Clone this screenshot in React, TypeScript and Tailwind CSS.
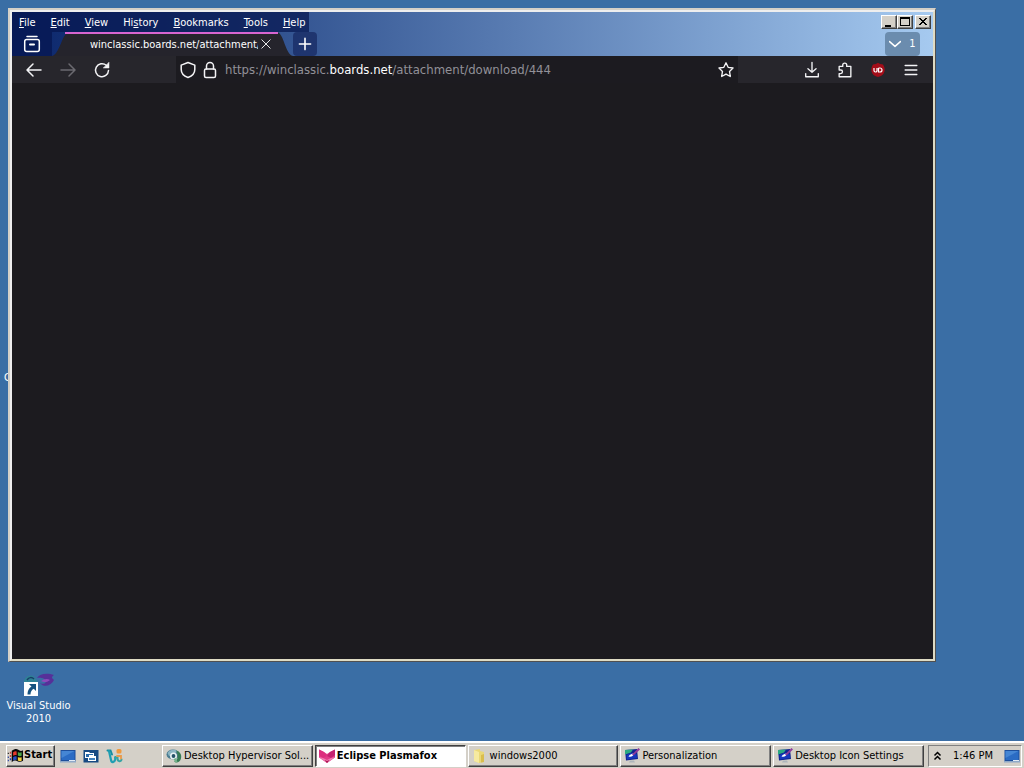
import type { ReactNode } from "react";

const UI = "font-['DejaVu_Sans_Condensed','DejaVu_Sans',sans-serif]";
const RAISED =
  "border border-t-white border-l-white border-r-[#404040] border-b-[#404040] shadow-[inset_-1px_-1px_0_#808080]";

function MenuItem({ label, at = 0 }: { label: string; at?: number }) {
  return (
    <button type="button" className="whitespace-nowrap leading-4">
      {label.slice(0, at)}
      <span className="underline underline-offset-1">{label[at]}</span>
      {label.slice(at + 1)}
    </button>
  );
}

function Icon({ size = "size-5", children }: { size?: string; children: ReactNode }) {
  return (
    <svg
      viewBox="0 0 20 20"
      className={`${size} shrink-0`}
      fill="none"
      stroke="currentColor"
      strokeWidth="1.5"
      strokeLinecap="round"
      strokeLinejoin="round"
      aria-hidden="true"
    >
      {children}
    </svg>
  );
}

function IconButton({ label, className = "", children }: { label: string; className?: string; children: ReactNode }) {
  return (
    <button type="button" aria-label={label} className={`flex size-5 shrink-0 items-center justify-center ${className}`}>
      {children}
    </button>
  );
}

function CaptionButton({ label, children }: { label: string; children: ReactNode }) {
  return (
    <button
      type="button"
      aria-label={label}
      className={`flex h-[14px] w-4 items-center justify-center bg-[#d4d0c8] text-black ${RAISED}`}
    >
      <svg viewBox="0 0 12 10" className="h-[10px] w-3" aria-hidden="true" shapeRendering="crispEdges">
        {children}
      </svg>
    </button>
  );
}

function MonitorIcon() {
  return (
    <svg viewBox="0 0 16 16" className="size-4 shrink-0" aria-hidden="true">
      <rect x="0.5" y="2" width="15" height="11" fill="#1d4f9c" />
      <rect x="1.5" y="3" width="13" height="9" fill="#2b6cc4" />
      <path d="M1.5 3h13L1.5 10z" fill="#4586d4" />
      <path d="M0 13h16v1.5H0z" fill="#8fa9c8" />
      <path d="M9 12h6v1H9z" fill="#e2ebf5" />
    </svg>
  );
}

function WindowsIcon() {
  return (
    <svg viewBox="0 0 16 16" className="size-4 shrink-0" aria-hidden="true">
      <rect x="0.5" y="2" width="15" height="12.5" fill="#174a82" />
      <path d="M2 4h4l1 1h4v3h2v5H5v-3H2z" fill="#fff" />
      <path d="M3 6h7v1H6v2H3z" fill="#286bac" />
      <path d="M6 10h6v2H6z" fill="#3d7fbd" />
    </svg>
  );
}

function MessengerIcon() {
  return (
    <svg viewBox="0 0 17 16" className="h-4 w-[17px] shrink-0" fill="none" strokeLinecap="round" aria-hidden="true">
      <path d="M1.500 2.500h3l1.500 4" stroke="#168da0" strokeWidth="2" />
      <path d="M3 3l2 9c.5 3 3.500 2.500 4 0l.5-3" stroke="#1e9eb2" strokeWidth="2.200" />
      <path d="M9 9.500h2.500c-.5 4 3.500 5 4 2" stroke="#35a4a5" strokeWidth="2" />
      <rect x="10.500" y="1" width="5" height="4.500" rx="1.500" fill="#f09a3d" />
      <path d="M11 8h4v2.500" stroke="#e99b4b" strokeWidth="1.800" />
    </svg>
  );
}

function FlagIcon() {
  return (
    <svg viewBox="0 0 18 16" className="h-4 w-[17px] shrink-0" aria-hidden="true">
      <path d="M5 2.500C8 .5 10 0 12 1.500s3 1.500 5 .5v11c-2 1.500-4 1.500-6 .5s-3-1-6 1z" fill="#0a0a0a" />
      <path d="M6.500 4C8 3 9 2.700 10.200 3.200v4C9 6.800 8 7 6.500 7.800z" fill="#e6392c" />
      <path d="M11.500 3.800c1.500.8 2.600.8 4 .2v3.800c-1.500.7-2.600.5-4-.2z" fill="#4ba746" />
      <path d="M6.500 9C8 8.200 9 8 10.200 8.400v3.900c-1.200-.4-2.300-.2-3.700.6z" fill="#264fc5" />
      <path d="M11.500 9c1.500.7 2.600.7 4 .2V13c-1.400.6-2.500.5-4-.2z" fill="#f4cf3a" />
      <path d="M3 3.500h1.500v2H3zM3 7h1.500v2H3z" fill="#c6463f" />
      <path d="M3 10.500h1.500v2H3zM.8 8.500H2V10H.8zM.8 12H2v1.500H.8z" fill="#263da0" />
      <path d="M.8 4.500H2V6H.8z" fill="#222" />
    </svg>
  );
}

function HypervisorIcon() {
  return (
    <svg viewBox="0 0 16 16" className="size-4 shrink-0" aria-hidden="true">
      <ellipse cx="7" cy="6.500" rx="6.500" ry="5" fill="#4c7d91" />
      <path d="M1.500 5C4 1.500 8 1 11 3L8 7 3 8z" fill="#8bb5c3" />
      <path d="M10 2.500c4 1 6 4 5 8s-5 5-7 3c4-1 5-6 2-11z" fill="#357b54" />
      <circle cx="7.500" cy="8" r="3.500" fill="#e7f1f3" />
      <circle cx="7.500" cy="8" r="1.900" fill="#235268" />
      <path d="M7.500 11l2 3.500 2-.5-1.500-4z" fill="#74b28b" />
    </svg>
  );
}

function FoxIcon() {
  return (
    <svg viewBox="0 0 16 16" className="size-4 shrink-0" aria-hidden="true">
      <path d="M0 1.500l5 2.500 3 2 3-2 5-2.500v8L8 15 0 9.500z" fill="#e23a87" />
      <path d="M0 1.500l5 2.500 3 4-4 2-4-3z" fill="#dc2e7e" />
      <path d="M16 1.500L11 4 8 8l4 2 4-3z" fill="#c42270" />
      <path d="M0 9l4 1 4 2 4-2 4-1-8 6z" fill="#f07bb1" />
      <path d="M5.500 12L8 15l2.500-3L8 13z" fill="#a5164f" />
    </svg>
  );
}

function FolderIcon() {
  return (
    <svg viewBox="0 0 16 16" className="size-4 shrink-0" aria-hidden="true">
      <path d="M2 2l6-1v2l4 1v10l-5 1-5-2z" fill="#ead877" />
      <path d="M2 2l5 2v11l-5-2z" fill="#f6eaa0" />
      <path d="M9 7l3-1v8l-3 .5z" fill="#d9bd4e" />
    </svg>
  );
}

function PersonalizeIcon() {
  return (
    <svg viewBox="0 0 16 16" className="size-4 shrink-0" aria-hidden="true">
      <path d="M1 2l12-1 1 10-12 1.500z" fill="#10248f" />
      <path d="M1 2l8-.6-2 3-6 2z" fill="#2ba982" />
      <path d="M2.500 7l5-2 5 1 .5 4-10 1.500z" fill="#1537bd" />
      <path d="M4.500 8.500C6 6 8 6 10 5.500 9 8 7.500 9.500 4.500 8.500z" fill="#fff" />
      <path d="M14.500 0l1.500 1.500-6.500 6-1.500-1z" fill="#8d3b9b" />
      <path d="M6 12.500h4l1 2H5z" fill="#aeb5bb" />
    </svg>
  );
}

function TaskButton({ label, icon, active = false }: { label: string; icon: ReactNode; active?: boolean }) {
  return (
    <button
      type="button"
      className={`flex h-[22px] min-w-0 flex-1 items-center gap-[2px] pl-[3px] text-left ${
        active
          ? "border border-t-[#404040] border-l-[#404040] border-r-white border-b-white bg-white font-bold shadow-[inset_1px_1px_0_#808080]"
          : `bg-[#d4d0c8] ${RAISED}`
      }`}
    >
      {icon}
      <span className="pt-px whitespace-nowrap">{label}</span>
    </button>
  );
}

function BrowserWindow() {
  return (
    <main className="absolute top-2 right-[88px] bottom-[79px] left-2 flex flex-col border-t-2 border-r border-b border-l-2 border-t-[#d4d0c8] border-r-[#505050] border-b-[#505050] border-l-[#d4d0c8] bg-[#d4d0c8]">
      <div className="flex min-h-0 flex-1 flex-col border-2 border-t-[#eeeeee] border-r-[#dedbc4] border-b-[#dedbc4] border-l-[#eeeeee] bg-[#1c1b1f]">
        <header className="bg-linear-to-r from-[#0a246a] to-[#a6caf0] text-white">
          <div className="flex h-5 items-center justify-between">
            <nav aria-label="Menu" className="flex h-5 items-center gap-[15px] bg-[#06164e]/70 pt-px pr-1 pl-[7px] text-[11px]">
              <MenuItem label="File" />
              <MenuItem label="Edit" />
              <MenuItem label="View" />
              <MenuItem label="History" at={2} />
              <MenuItem label="Bookmarks" />
              <MenuItem label="Tools" />
              <MenuItem label="Help" />
            </nav>
            <div className="flex pr-[2px]">
              <CaptionButton label="Minimize">
                <path d="M2 8h6v2H2z" fill="#000" />
              </CaptionButton>
              <CaptionButton label="Maximize">
                <path d="M1 0h10v9H1zM2 2v6h8V2z" fill="#000" fillRule="evenodd" />
              </CaptionButton>
              <span className="w-[2px]" />
              <CaptionButton label="Close">
                <path d="M2 1h2v1h1v1h2V2h1V1h2v1H9v1H8v1H7v1h1v1h1v1h1v1H8V7H7V6H5v1H4v1H2V7h1V6h1V5h1V4H4V3H3V2H2z" fill="#000" />
              </CaptionButton>
            </div>
          </div>
          <div className="flex h-6 items-stretch">
            <div className="flex w-10 shrink-0 items-center justify-center bg-[#06164e]/70">
              <IconButton label="Recent browsing">
                <Icon>
                  <path d="M5 2.500h10" />
                  <rect x="2.700" y="5.500" width="14.600" height="12" rx="2" />
                  <path d="M8 10.500h4" strokeWidth="2" />
                </Icon>
              </IconButton>
            </div>
            <div className="relative flex w-[241px] shrink-0 items-center pl-[38px]">
              <svg
                viewBox="0 0 241 24"
                preserveAspectRatio="none"
                className="absolute inset-0 size-full"
                aria-hidden="true"
              >
                <path d="M0 24C8 22 10 1 17 0h208c7 1 8 22 16 24z" fill="#25242c" />
                <path d="M13 0h213v2H13z" fill="#d765d0" />
              </svg>
              <span className="relative w-[168px] overflow-hidden pt-px text-[11px] leading-4 whitespace-nowrap">
                winclassic.boards.net/attachment/
              </span>
              <button type="button" aria-label="Close tab" className="relative flex size-4 items-center justify-center">
                <Icon size="size-3">
                  <path d="M3 3l14 14M17 3L3 17" />
                </Icon>
              </button>
            </div>
            <button
              type="button"
              aria-label="New tab"
              className="flex w-6 items-center justify-center rounded bg-[#15275f]/70"
            >
              <Icon size="size-4">
                <path d="M10 3v14M3 10h14" strokeWidth="2" />
              </Icon>
            </button>
            <button
              type="button"
              aria-label="List all tabs, 1 open"
              className="mr-[13px] ml-auto flex w-[35px] items-center justify-center gap-2 rounded bg-[#6b8cae] text-[11px]"
            >
              <Icon size="size-3">
                <path d="M1 6l9 8 9-8" strokeWidth="2.500" />
              </Icon>
              <span className="pt-px">1</span>
            </button>
          </div>
        </header>

        <div className="flex h-[27px] shrink-0 items-center bg-[#27262c] pl-3 text-[#f4f4f6]">
          <div className="flex w-[152px] shrink-0 items-center gap-[14px]">
            <IconButton label="Back">
              <Icon>
                <path d="M17 10H3.500M9 4l-6 6 6 6" />
              </Icon>
            </IconButton>
            <IconButton label="Forward" className="text-[#6b6a70]">
              <Icon>
                <path d="M3 10h13.500M11 4l6 6-6 6" />
              </Icon>
            </IconButton>
            <IconButton label="Reload">
              <Icon>
                <path d="M16.500 10.500a6.500 6.500 0 1 1-2.200-5.200l1 1" />
                <path d="M17 2.500V8h-5.500z" fill="currentColor" strokeWidth="0.500" />
              </Icon>
            </IconButton>
          </div>
          <div className="flex h-full min-w-0 flex-1 items-center gap-[2px] bg-[#1c1b20] pr-[2px] pl-[2px]">
            <IconButton label="Tracking protection">
              <Icon>
                <path d="M10 2.500l6.800 2.600v4.300c0 4-2.800 6.600-6.800 8.100-4-1.500-6.800-4.100-6.800-8.100V5.100z" />
              </Icon>
            </IconButton>
            <IconButton label="Site information">
              <Icon>
                <rect x="4.500" y="9" width="11" height="8.500" rx="1.500" />
                <path d="M6.500 9V6a3.500 3.500 0 0 1 7 0v3" />
              </Icon>
            </IconButton>
            <a
              href="https://winclassic.boards.net/attachment/download/444"
              className="ml-[3px] min-w-0 flex-1 truncate text-[13px] leading-5 text-[#929198]"
            >
              https://winclassic.<span className="text-white">boards.net</span>/attachment/download/444
            </a>
            <IconButton label="Bookmark this page">
              <Icon size="size-[18px]">
                <path d="M10 2l2.400 5 5.400.8-3.900 3.800.9 5.600-4.800-2.700-4.800 2.700.9-5.600-3.900-3.800 5.400-.8z" />
              </Icon>
            </IconButton>
          </div>
          <div className="flex w-[195px] shrink-0 items-center justify-end gap-[13px] pr-3">
            <IconButton label="Downloads">
              <Icon size="size-[18px]">
                <path d="M10 1.500v11M5.500 8.500l4.500 4 4.500-4M3 14v3.500h14V14" />
              </Icon>
            </IconButton>
            <IconButton label="Extensions">
              <Icon size="size-[18px]">
                <path d="M3.500 17.500V14h1.700a2 2 0 0 0 0-4H3.500V6h4V4.500a2.200 2.200 0 0 1 4.400 0V6H16.500v11.500z" />
              </Icon>
            </IconButton>
            <IconButton label="uBlock Origin">
              <svg viewBox="0 0 16 16" className="size-4" aria-hidden="true">
                <path d="M8 .8c1.500 1 3 1.600 5 1.700C14.500 5 15 7 14.500 9.500c-.7 3-3.500 5-6.500 5.500-3-.5-5.800-2.500-6.500-5.500C1 7 1.500 5 3 2.500 5 2.400 6.500 1.800 8 .8z" fill="#a30d19" />
                <path d="M4 6v2.500a1.500 1.500 0 0 0 3 0V6M8.500 6v4H10a2 2 0 0 0 0-4H8.500" fill="none" stroke="#fff" strokeWidth="1.200" />
              </svg>
            </IconButton>
            <IconButton label="Open application menu">
              <Icon size="size-[18px]">
                <path d="M3.500 5h13M3.500 10h13M3.500 15h13" />
              </Icon>
            </IconButton>
          </div>
        </div>
        <section aria-label="Page" className="flex-1" />
      </div>
    </main>
  );
}

export default function App() {
  return (
    <div className={`flex min-h-screen flex-col overflow-hidden bg-[#3a6ea5] text-[11px] ${UI}`}>
      <div className="relative flex-1">
        <span className="absolute top-[370px] left-1 leading-4 text-white">C</span>
        <a
          href="#visual-studio"
          className="absolute bottom-4 left-0 flex w-[77px] flex-col items-center text-center leading-[13px] text-white"
        >
          <svg viewBox="0 0 32 26" className="h-[26px] w-8" aria-hidden="true">
            <path d="M1 8c1-5 8-8 11-3l3 4H1z" fill="#2f8295" />
            <path d="M4 7c2-3 5-3 7-1" fill="none" stroke="#173f68" strokeWidth="1.500" />
            <path d="M14 5c3-5 11-5 17-3-1 1-2 1-2 3l2 2c-3 6-10 8-14 3 4 2 6 0 6-2s-5-4-9-3z" fill="#563099" />
            <path d="M18 8c3 2 7 1 9-1-3-2-6-1-9 1z" fill="#8d4bbb" />
            <rect x="1" y="9" width="14" height="14" fill="#fff" />
            <path d="M6 11h7v7l-2.300-2.300C8.500 17 7.500 19 7.500 21.500H4.500c0-3.500 1-6 4-8z" fill="#17527f" />
          </svg>
          <span>Visual Studio 2010</span>
        </a>
        <BrowserWindow />
      </div>

      <footer className="flex h-[27px] shrink-0 items-center border-t-2 border-white bg-[#d4d0c8] text-black">
        <button
          type="button"
          className={`ml-[6px] flex h-[22px] w-[49px] shrink-0 items-center text-[11px] font-bold ${RAISED}`}
        >
          <FlagIcon />
          Start
        </button>
        <div className="flex w-[107px] shrink-0 items-center gap-[7px] pl-[5px]">
          <button type="button" aria-label="Show desktop">
            <MonitorIcon />
          </button>
          <button type="button" aria-label="Switch windows">
            <WindowsIcon />
          </button>
          <button type="button" aria-label="Messenger">
            <MessengerIcon />
          </button>
        </div>
        <nav aria-label="Running programs" className="flex min-w-0 flex-1 gap-[2px]">
          <TaskButton label="Desktop Hypervisor Sol..." icon={<HypervisorIcon />} />
          <TaskButton label="Eclipse Plasmafox" icon={<FoxIcon />} active />
          <TaskButton label="windows2000" icon={<FolderIcon />} />
          <TaskButton label="Personalization" icon={<PersonalizeIcon />} />
          <TaskButton label="Desktop Icon Settings" icon={<PersonalizeIcon />} />
        </nav>
        <div className="ml-1 flex h-[22px] w-[94px] shrink-0 items-center justify-between border border-t-[#808080] border-r-white border-b-white border-l-[#808080] pr-[1px] pl-1">
          <button type="button" aria-label="Show hidden icons">
            <svg viewBox="0 0 9 10" className="h-[10px] w-[9px]" fill="none" stroke="#000" strokeWidth="1.500" aria-hidden="true">
              <path d="M1.500 4.500l3-3 3 3M1.500 8.500l3-3 3 3" />
            </svg>
          </button>
          <time className="pt-px whitespace-nowrap">1:46 PM</time>
          <MonitorIcon />
        </div>
        <span className="w-[2px] shrink-0" />
      </footer>
    </div>
  );
}
